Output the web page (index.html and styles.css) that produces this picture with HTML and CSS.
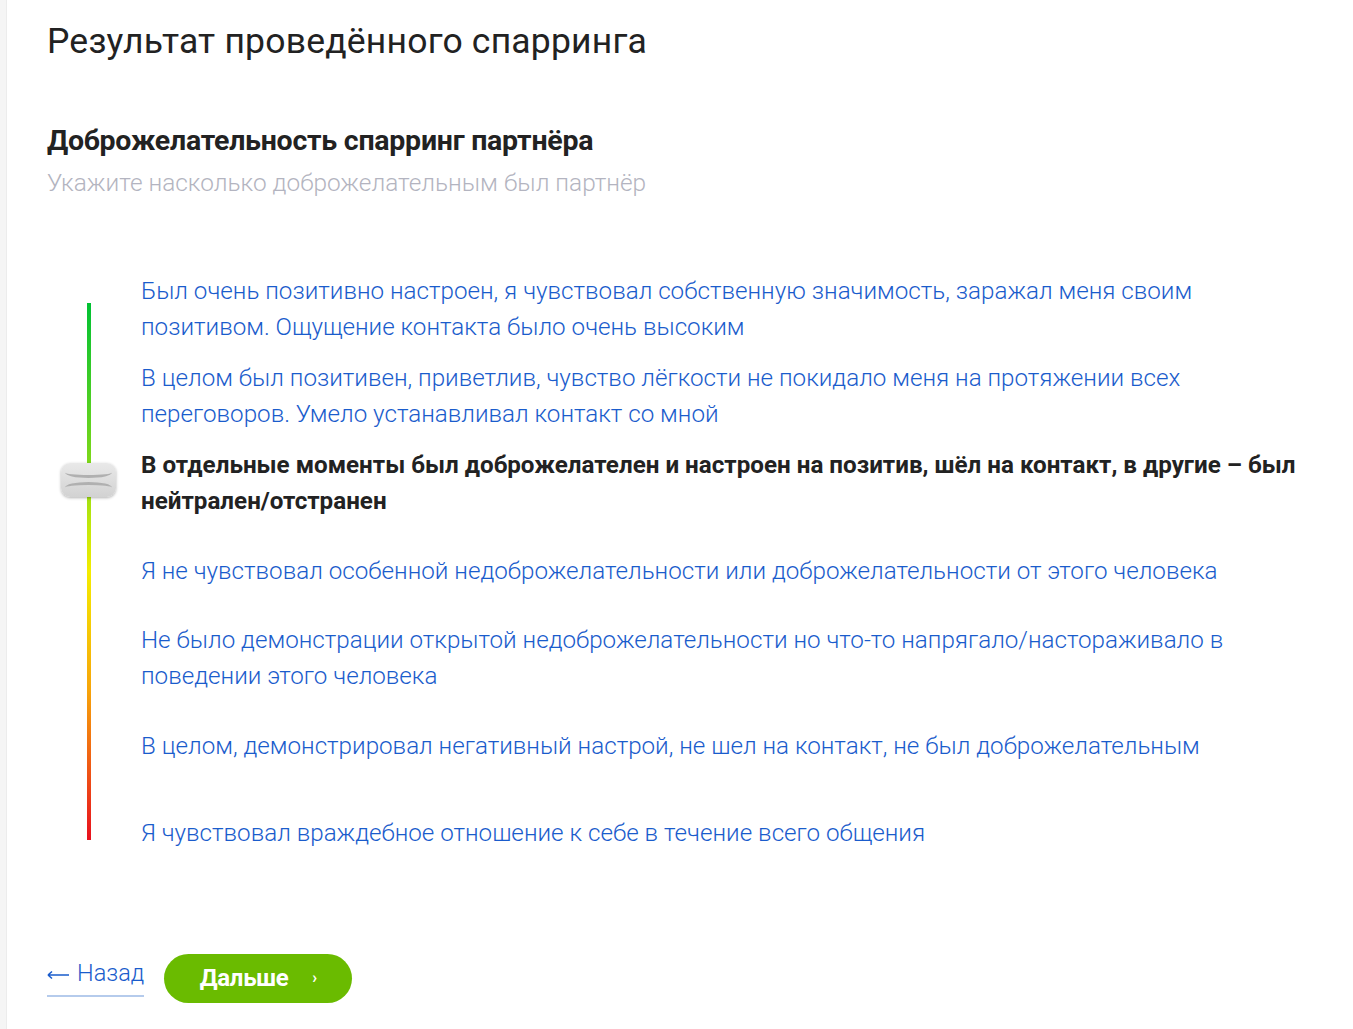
FILE: index.html
```html
<!DOCTYPE html>
<html lang="ru">
<head>
    <meta charset="UTF-8">
    <meta name="viewport" content="width=device-width, initial-scale=1.0">
    <title>Результат спарринга</title>
    <link rel="stylesheet" href="styles.css">
</head>
<body>

<div class="side-strip"></div>

<div class="page">
    <h1 class="page-title">Результат проведённого спарринга</h1>

    <div class="question">
        <h2 class="question-title">Доброжелательность спарринг партнёра</h2>
        <p class="question-hint">Укажите насколько доброжелательным был партнёр</p>
    </div>

    <div class="scale">
        <div class="scale-track">
            <div class="scale-line"></div>
            <div class="scale-handle"></div>
        </div>
        <ul class="scale-options">
            <li>Был очень позитивно настроен, я чувствовал собственную значимость, заражал меня своим позитивом. Ощущение контакта было очень высоким</li>
            <li>В целом был позитивен, приветлив, чувство лёгкости не покидало меня на протяжении всех переговоров. Умело устанавливал контакт со мной</li>
            <li class="active">В отдельные моменты был доброжелателен и настроен на позитив, шёл на контакт, в другие – был нейтрален/отстранен</li>
            <li>Я не чувствовал особенной недоброжелательности или доброжелательности от этого человека</li>
            <li>Не было демонстрации открытой недоброжелательности но что-то напрягало/настораживало в поведении этого человека</li>
            <li>В целом, демонстрировал негативный настрой, не шел на контакт, не был доброжелательным</li>
            <li>Я чувствовал враждебное отношение к себе в течение всего общения</li>
        </ul>
    </div>

    <div class="actions">
        <a href="#" class="back-link"><svg class="back-arrow" width="22" height="10" viewBox="0 0 22 10"><path d="M1 5H22M1 5L5 1.5M1 5L5 8.5" stroke="#1a5ccc" stroke-width="1.6" fill="none"/></svg>Назад</a>
        <button class="next-button">Дальше <span class="arrow">›</span></button>
    </div>
</div>

</body>
</html>
```

FILE: styles.css
```css
body {
    margin: 0;
    padding: 0;
    font-family: Roboto, 'Noto Sans', sans-serif;
    background: #fff;
    color: #222;
    display: flex;
    min-height: 100vh;
}
.side-strip {
    width: 6px;
    background: #f5f5f5;
    border-right: 1px solid #ececec;
    flex-shrink: 0;
}
.page {
    padding: 19px 0 0 40px;
    flex: 1;
}
.page-title {
    margin: 0;
    font-size: 35.5px;
    line-height: 44px;
    font-weight: 400;
    color: #222;
    letter-spacing: 0.2px;
}
.question {
    margin-top: 60px;
}
.question-title {
    margin: 0;
    font-size: 28.5px;
    line-height: 36px;
    font-weight: 700;
    color: #222;
    letter-spacing: -0.25px;
}
.question-hint {
    margin: 9px 0 0;
    font-size: 24.4px;
    line-height: 30px;
    font-weight: 300;
    color: #b3b4c0;
}
.scale {
    display: flex;
    margin-top: 67px;
}
.scale-track {
    width: 94px;
    flex-shrink: 0;
    position: relative;
}
.scale-line {
    position: absolute;
    left: 40px;
    top: 38px;
    bottom: 37px;
    width: 4px;
    background: linear-gradient(to bottom, #00c133 0%, #7fd81a 30%, #c4e80a 42%, #f4ec00 50%, #f7a50a 72%, #e8101e 100%);
}
.scale-handle {
    position: absolute;
    left: 14px;
    top: 198px;
    width: 55px;
    height: 34px;
    border-radius: 9px;
    background: linear-gradient(to bottom, #e9e9e9, #d2d2d2);
    box-shadow: 0 1px 3px rgba(0,0,0,0.3);
}
.scale-handle::before,
.scale-handle::after {
    content: "";
    position: absolute;
    left: 4px;
    right: 4px;
    height: 8px;
    border-radius: 50%;
}
.scale-handle::before {
    top: 4px;
    border-bottom: 3px solid #b0b0b0;
}
.scale-handle::after {
    bottom: 4px;
    border-top: 3px solid #b0b0b0;
}
.scale-options {
    list-style: none;
    margin: 0;
    padding: 0;
    width: 1170px;
}
.scale-options li {
    height: 87.4px;
    display: flex;
    align-items: center;
    font-size: 24.2px;
    font-weight: 300;
    line-height: 36px;
    color: #1a5ccc;
    cursor: pointer;
}
.scale-options li.active {
    font-weight: 700;
    color: #222;
    letter-spacing: 0;
}
.actions {
    display: flex;
    align-items: center;
    gap: 20px;
    margin-top: 77px;
}
.back-link {
    display: flex;
    align-items: center;
    gap: 8px;
    font-size: 23.5px;
    font-weight: 300;
    color: #1a5ccc;
    text-decoration: none;
    border-bottom: 2px solid #b5cbec;
    padding-bottom: 8px;
    margin-top: 0;
}
.back-arrow {
    margin-top: 4px;
}
.next-button {
    background: #6abb00;
    color: #fff;
    border: none;
    border-radius: 25px;
    height: 49px;
    width: 188px;
    font-family: Roboto, 'Noto Sans', sans-serif;
    font-size: 24px;
    font-weight: 700;
    cursor: pointer;
    letter-spacing: -0.3px;
}
.next-button .arrow {
    font-size: 16px;
    margin-left: 18px;
    vertical-align: 3px;
}
```
